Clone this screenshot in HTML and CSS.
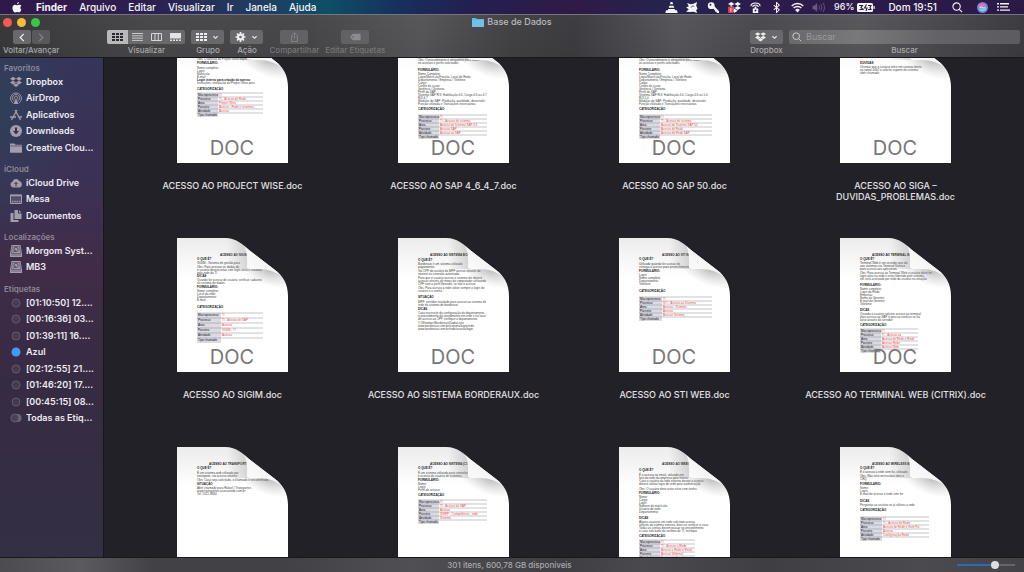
FILE: index.html
```html
<!DOCTYPE html>
<html lang="pt-BR">
<head>
<meta charset="utf-8">
<title>Base de Dados</title>
<link rel="stylesheet" href="styles.css">
</head>
<body>
<svg class="defs" aria-hidden="true">
  <symbol id="dropbox" viewBox="0 0 14 12"><path d="M3.5 0L7 2.2 3.5 4.4 0 2.2zM10.500 0L14 2.200 10.500 4.400 7 2.200zM3.500 4.400L7 6.600 3.500 8.800 0 6.600zM10.500 4.400L14 6.600 10.500 8.800 7 6.600zM7 7.400L10.500 9.600 7 11.800 3.500 9.600z"/></symbol>
  <symbol id="chev" viewBox="0 0 8 6"><path d="M1.500 1.500L4 4 6.500 1.500" fill="none" stroke="currentColor" stroke-width="1.300"/></symbol>
  <symbol id="lens" viewBox="0 0 12 12"><path d="M8 8l3 3M9 5a4 4 0 1 1-8 0 4 4 0 0 1 8 0z" fill="none" stroke="currentColor" stroke-width="1.200"/></symbol>
  <symbol id="grid" viewBox="0 0 11 8"><path d="M0 0h3v2H0zM4 0h3v2H4zM8 0h3v2H8zM0 3h3v2H0zM4 3h3v2H4zM8 3h3v2H8zM0 6h3v2H0zM4 6h3v2H4zM8 6h3v2H8z"/></symbol>
  <symbol id="disk" viewBox="0 0 12 12"><path d="M1.500 0h9L12 9v3H0V9z"/><path d="M2.500 1.500h7L10.500 8.500h-9zM1 10h10" fill="none" stroke="#3d2d49" stroke-width=".5"/><circle cx="6" cy="4.500" r="2.200" fill="none" stroke="#3d2d49" stroke-width=".7"/><path d="M6 4.500L3.500 7.500" stroke="#3d2d49" stroke-width=".8"/></symbol>
  <symbol id="tag" viewBox="0 0 12 12"><circle cx="6" cy="6" r="4" fill="#ffffff12" stroke="#6b6474" stroke-width=".8"/></symbol>
</svg>

<header class="menubar">
  <nav class="menus">
    <svg class="apple" viewBox="0 0 12 13"><path d="M8.300 0c.1 1.300-1 2.600-2.300 2.600C5.900 1.400 7.100.2 8.300 0zM10 6.600c0-1.200.8-1.900 1.300-2.200C10.500 3.300 9.400 3.100 8.800 3.100c-1.100 0-1.700.6-2.600.6-.8 0-1.600-.6-2.600-.6C1.900 3.200.5 4.700.5 7c0 2.600 1.700 5.500 3.200 5.500.8 0 1.300-.5 2.300-.5s1.300.5 2.300.5c1.300 0 2.400-1.900 2.900-3.300C10.400 8.900 10 7.800 10 6.600z"/></svg>
    <button class="menu app">Finder</button>
    <button class="menu">Arquivo</button>
    <button class="menu">Editar</button>
    <button class="menu">Visualizar</button>
    <button class="menu">Ir</button>
    <button class="menu">Janela</button>
    <button class="menu">Ajuda</button>
  </nav>
  <div class="extras">
    <svg viewBox="0 0 14 12"><path d="M6 0h2l.8 2.500H5.200zM4.700 4h4.600l.7 2.300H4zM3.500 7.500h7l.6 1.500H13l.7 3H.3L1 9h1.900z"/></svg>
    <svg viewBox="0 0 14 12"><path d="M1 1l4 1.500L8 2l4-2-1 4 1.500 3L11 9l1 3-4-1.500L4 11 0 10.500 3 8 0 6l3-1.500z"/><path d="M5.500 6l2-2 1 1" stroke="#25204c" fill="none"/></svg>
    <svg viewBox="0 0 14 12"><circle cx="4.500" cy="4" r="3.700"/><path d="M5.500 6l2-2 5.500 6v2h-2.500V10.500H9L8.500 9z"/><circle cx="3.700" cy="3" r="1" fill="#28204c"/></svg>
    <svg viewBox="0 0 14 12"><use href="#dropbox"/><rect y="5" width="6" height="7" rx="1" fill="#d9434a"/><path d="M3 6.500v4" stroke="#fff"/></svg>
    <svg viewBox="0 0 14 12"><path d="M2 4.500C2 0 12 0 12 4.500M4 5.500c0-3 6-3 6 0" fill="none" stroke="currentColor" stroke-width="1.200"/><path d="M6 5h2v2h2v5H4V7h2z"/><circle cx="7" cy="9.300" r="1" fill="#2a1d4a"/></svg>
    <svg viewBox="0 0 14 12"><path d="M4 3.500l6 5-3 3V.5l3 3-6 5" fill="none" stroke="currentColor" stroke-width="1.100"/></svg>
    <svg viewBox="0 0 14 12"><path d="M.7 4.300a9 9 0 0 1 12.600 0M2.800 6.600a6 6 0 0 1 8.400 0" fill="none" stroke="currentColor" stroke-width="1.600"/><path d="M4.500 8.600a3.700 3.700 0 0 1 5 0L7 11.500z"/></svg>
    <svg class="faint" viewBox="0 0 14 12"><path d="M0 4h2l3-3v10L2 8H0z"/><path d="M7 4q1 2 0 4M9 2.500q2.500 3.500 0 7M11.300 1q3.500 5 0 10" fill="none" stroke="currentColor"/></svg>
    <span class="power">96%</span>
    <svg class="batt" viewBox="0 0 18 9"><rect width="16" height="9" rx="1.500"/><path d="M16.500 3h1.200v3h-1.200z"/><path d="M2 2.500h3.500L4 4.500l2 2H2.500M9.500 1.500L7.500 5H10L9 8M11 2.500h3l-1 2 1 2h-3" fill="none" stroke="#2a1d4a" stroke-width="1.100"/></svg>
    <span class="clock">Dom 19:51</span>
    <svg class="spot" viewBox="0 0 12 12"><use href="#lens"/></svg>
    <svg class="siri" viewBox="0 0 12 12"><circle cx="6" cy="6" r="6" fill="#7d7fc8"/><path d="M1 5c3-5 7-4 9-1-3 0-5 3-9 1z" fill="#e673b8"/><path d="M2 8c3-3 6 1 9-2-1 5-7 6-9 2z" fill="#5fd9ec"/><path d="M2.500 6.500c3-3 4 2 7-1" stroke="#fff" fill="none"/></svg>
    <svg class="list" viewBox="0 0 13 8"><path d="M0 0h2v1.400H0zM3 0h9v1.400H3zM0 3.200h2v1.400H0zM3 3.200h8v1.400H3zM0 6.400h2v1.400H0zM3 6.400h10v1.400H3z"/></svg>
  </div>
</header>

<div class="window">
  <div class="chrome">
    <div class="titlebar">
      <div class="lights">
        <button class="light red" aria-label="Fechar"></button>
        <button class="light yellow" aria-label="Minimizar"></button>
        <button class="light green" aria-label="Ampliar"></button>
      </div>
      <h1 class="title"><svg viewBox="0 0 12 9"><path d="M0 0h4l1 1h7v8H0z" fill="#62b5dc"/><path d="M0 2h12v7H0z" fill="#6fc2e6"/></svg>Base de Dados</h1>
    </div>
    <div class="toolbar">
      <div class="tool nav">
        <div class="pair">
          <button class="btn arrow" aria-label="Voltar"><svg viewBox="0 0 8 10"><path d="M6 1L2 5l4 4" fill="none" stroke="currentColor" stroke-width="1.400"/></svg></button>
          <button class="btn arrow off" aria-label="Avançar"><svg viewBox="0 0 8 10"><path d="M2 1l4 4-4 4" fill="none" stroke="currentColor" stroke-width="1.400"/></svg></button>
        </div>
        <span class="cap">Voltar/Avançar</span>
      </div>
      <div class="tool">
        <div class="segments">
          <button class="seg on" aria-label="Ícones"><svg viewBox="0 0 11 8"><use href="#grid"/></svg></button>
          <button class="seg" aria-label="Lista"><svg viewBox="0 0 11 8"><path d="M0 .5h11M0 2.800h11M0 5.100h11M0 7.400h11" stroke="currentColor" stroke-width=".8"/></svg></button>
          <button class="seg" aria-label="Colunas"><svg viewBox="0 0 11 8"><path d="M.5.5h10v7H.5zM4 .5v7M7.300.5v7" fill="none" stroke="currentColor" stroke-width=".9"/></svg></button>
          <button class="seg" aria-label="Galeria"><svg viewBox="0 0 11 8"><path d="M0 0h11v5.500H0zM0 6.500h2V8H0zM3 6.500h2V8H3zM6 6.500h2V8H6zM9 6.500h2V8H9z"/></svg></button>
        </div>
        <span class="cap">Visualizar</span>
      </div>
      <div class="tool">
        <button class="btn drop" aria-label="Grupo"><svg class="ic" viewBox="0 0 11 8"><use href="#grid"/></svg><svg class="chev" viewBox="0 0 8 6"><use href="#chev"/></svg></button>
        <span class="cap">Grupo</span>
      </div>
      <div class="tool">
        <button class="btn drop" aria-label="Ação"><svg class="ic" viewBox="0 0 12 12"><path d="M6 0v12M0 6h12M1.800 1.800l8.400 8.400M10.200 1.800l-8.400 8.400" stroke="currentColor" stroke-width="2"/><circle cx="6" cy="6" r="4.300"/><circle cx="6" cy="6" r="1.600" fill="#68676b"/></svg><svg class="chev" viewBox="0 0 8 6"><use href="#chev"/></svg></button>
        <span class="cap">Ação</span>
      </div>
      <div class="tool off">
        <button class="btn wide" aria-label="Compartilhar" disabled><svg class="ic" viewBox="0 0 12 12"><path d="M4 4.500H2.500v7h7v-7H8M6 8V1M3.800 3L6 .8 8.200 3" fill="none" stroke="currentColor"/></svg></button>
        <span class="cap">Compartilhar</span>
      </div>
      <div class="tool off">
        <button class="btn wide" aria-label="Editar Etiquetas" disabled><svg class="ic" viewBox="0 0 12 8"><path d="M3 .5h8.500v7H3L0 4z"/><circle cx="3.300" cy="4" r=".8" fill="#59585c"/></svg></button>
        <span class="cap">Editar Etiquetas</span>
      </div>
      <div class="tool end">
        <button class="btn drop" aria-label="Dropbox"><svg class="ic" viewBox="0 0 14 12"><use href="#dropbox"/></svg><svg class="chev" viewBox="0 0 8 6"><use href="#chev"/></svg></button>
        <span class="cap">Dropbox</span>
      </div>
      <div class="tool finder">
        <div class="search"><svg viewBox="0 0 12 12"><use href="#lens"/></svg><input id="q" type="search" placeholder="Buscar"></div>
        <label class="cap" for="q">Buscar</label>
      </div>
    </div>
  </div>

  <div class="body">
    <aside class="sidebar">
      <section>
        <h2>Favoritos</h2>
        <ul>
          <li><a href="#"><svg viewBox="0 0 14 12"><use href="#dropbox"/></svg>Dropbox</a></li>
          <li><a href="#"><svg viewBox="0 0 12 12"><path d="M3 11a5.500 5.500 0 1 1 6 0M4 9.200a3.700 3.700 0 1 1 4 0M5 7.500a1.800 1.800 0 1 1 2 0" fill="none" stroke="currentColor" stroke-width=".9"/><path d="M6 6l2.500 6h-5z"/></svg>AirDrop</a></li>
          <li><a href="#"><svg viewBox="0 0 12 12"><path d="M5 1l5.500 10M7 1L1.500 11M0 8h6M8.500 8H12" fill="none" stroke="currentColor" stroke-width="1.300"/></svg>Aplicativos</a></li>
          <li><a href="#"><svg viewBox="0 0 12 12"><circle cx="6" cy="6" r="6"/><path d="M5 2.500h2V6h2L6 9.500 3 6h2z" fill="#393253"/></svg>Downloads</a></li>
          <li><a href="#"><svg viewBox="0 0 12 12"><path d="M0 1.500h4.500l1 1.300H12v8H0z"/><path d="M0 4h12" stroke="#3d3456" stroke-width=".6"/></svg>Creative Clou...</a></li>
        </ul>
      </section>
      <section>
        <h2>iCloud</h2>
        <ul>
          <li><a href="#"><svg viewBox="0 0 12 12"><path d="M3 10.500a3 3 0 0 1-.5-5.800A3.700 3.700 0 0 1 9.300 4 3.300 3.300 0 0 1 9 10.500z"/><path d="M6 5.500v4M4.500 7L6 5.500 7.500 7" stroke="#3c3050" fill="none"/></svg>iCloud Drive</a></li>
          <li><a href="#"><svg viewBox="0 0 12 12"><path d="M.5 2h11v8.500H.5z" fill="#ffffff22" stroke="currentColor"/><path d="M0 2.500h12M2 8.500h1.300M4.300 8.500h1.300M6.600 8.500h1.300M9 8.500h1.300" stroke="currentColor" stroke-width="1.300"/></svg>Mesa</a></li>
          <li><a href="#"><svg viewBox="0 0 12 12"><path d="M4.500 0H8v3.500h3.500V9h-7zM9 0l2.500 2.500H9zM.5 3h3v7h5v2h-8z"/></svg>Documentos</a></li>
        </ul>
      </section>
      <section>
        <h2>Localizações</h2>
        <ul>
          <li><a href="#"><svg viewBox="0 0 12 12"><use href="#disk"/></svg>Morgom Syst...</a></li>
          <li><a href="#"><svg viewBox="0 0 12 12"><use href="#disk"/></svg>MB3</a></li>
        </ul>
      </section>
      <section>
        <h2>Etiquetas</h2>
        <ul>
          <li><a href="#"><svg viewBox="0 0 12 12"><use href="#tag"/></svg>[01:10:50] 12....</a></li>
          <li><a href="#"><svg viewBox="0 0 12 12"><use href="#tag"/></svg>[00:16:36] 03...</a></li>
          <li><a href="#"><svg viewBox="0 0 12 12"><use href="#tag"/></svg>[01:39:11] 16....</a></li>
          <li><a href="#"><svg viewBox="0 0 12 12"><circle cx="6" cy="6" r="4.500" fill="#3f9bfa"/></svg>Azul</a></li>
          <li><a href="#"><svg viewBox="0 0 12 12"><use href="#tag"/></svg>[02:12:55] 21....</a></li>
          <li><a href="#"><svg viewBox="0 0 12 12"><use href="#tag"/></svg>[01:46:20] 17....</a></li>
          <li><a href="#"><svg viewBox="0 0 12 12"><use href="#tag"/></svg>[00:45:15] 08...</a></li>
          <li><a href="#"><svg viewBox="0 0 12 12"><circle cx="7.500" cy="6" r="4" fill="#6b6474"/><circle cx="4.800" cy="6" r="4" fill="#4b4257" stroke="#6b6474" stroke-width=".8"/></svg>Todas as Etiq...</a></li>
        </ul>
      </section>
    </aside>
    <main class="files" id="files"></main>
  </div>

  <footer class="status">
    <span>301 itens, 600,78 GB disponíveis</span>
    <input class="zoom" type="range" min="0" max="100" value="68" aria-label="Tamanho dos ícones">
  </footer>
</div>
<script src="app.js"></script>
</body>
</html>
```
FILE: styles.css
```css
* { box-sizing: border-box; }
body {
  margin: 0;
  height: 100vh;
  display: flex;
  flex-direction: column;
  overflow: hidden;
  background: #222127;
  color: #e6e5e8;
  font: 500 9px/12px Inter, "Liberation Sans", sans-serif;
}
button {
  margin: 0;
  padding: 0;
  border: 0;
  background: none;
  color: inherit;
  font: inherit;
}
svg { fill: currentColor; flex: none; display: block; }
.defs { position: absolute; width: 0; height: 0; }

.menubar {
  display: flex;
  justify-content: space-between;
  align-items: center;
  height: 14px;
  padding: 0 14px 0 12px;
  color: #f5f4f8;
  background: linear-gradient(90deg, #30184a 0%, #2c2050 15%, #213a60 24%, #0d4f66 32%, #17305c 39%, #231f50 46%, #301a47 56%, #232450 66%, #2c1b4b 75%, #2a1a46 100%);
}
.menus { display: flex; align-items: center; gap: 12px; font-size: 10px; }
.apple { width: 10px; height: 11px; margin-right: 2px; }
.app { font-weight: 700; }
.extras { display: flex; align-items: center; gap: 8px; }
.extras svg { width: 13px; height: 11px; }
.extras .faint { color: #665b80; width: 14px; }
.power { margin-right: -5px; }
.extras .batt { width: 18px; height: 9px; }
.clock { font-size: 10px; margin: 0 6px 0 5px; }
.extras .siri { margin-left: 4px; }
.extras .list { width: 13px; height: 8px; }

.window {
  flex: 1;
  min-height: 0;
  display: flex;
  flex-direction: column;
  border-top: 1px solid #77757b;
}
.chrome {
  border-bottom: 1px solid #19181c;
  background: linear-gradient(#0000, #0001), linear-gradient(90deg, #39393b 0%, #4a494c 15%, #48474a 30%, #58575a 41%, #434245 50%, #3e3d41 56%, #58575b 66%, #4c4b4f 74%, #59585c 84%, #3d3c41 100%);
}
.titlebar {
  display: grid;
  grid-template-columns: 1fr auto 1fr;
  align-items: center;
  height: 14px;
  padding: 0 3px;
}
.lights { display: flex; gap: 5px; }
.light { width: 9px; height: 9px; border-radius: 50%; }
.red { background: #f35a51; }
.yellow { background: #f5bd35; }
.green { background: #35c748; }
.title {
  display: flex;
  align-items: center;
  gap: 3px;
  margin: 0;
  font-size: 9px;
  font-weight: 500;
  color: #bdbcc0;
}
.title svg { width: 12px; height: 9px; }
.toolbar { display: flex; gap: 6px; padding: 1px 4px 1px 3px; }
.tool { display: flex; flex-direction: column; align-items: center; }
.nav { margin-right: 42px; }
.end { margin-left: auto; }
.cap { font-size: 8px; line-height: 12px; color: #aaa9ad; white-space: nowrap; }
.off .cap { color: #77767a; }
.pair { display: flex; gap: 1px; }
.btn {
  display: flex;
  align-items: center;
  justify-content: center;
  height: 14px;
  border-radius: 2px;
  background: #69686c;
  color: #eeedf0;
}
.arrow { width: 18px; }
.arrow svg { width: 8px; height: 9px; }
.arrow.off { background: #59585c; color: #858488; }
.drop { width: 33px; gap: 5px; }
.ic { width: 11px; height: 10px; }
.chev { width: 7px; height: 5px; }
.wide { width: 28px; }
.off .btn { background: #626165; color: #8c8b8f; }
.segments { display: flex; height: 14px; border-radius: 2px; overflow: hidden; background: #69686c; }
.seg { display: grid; place-items: center; width: 19px; color: #e3e2e5; }
.seg svg { width: 11px; height: 8px; }
.seg.on { width: 21px; background: #b9b8bc; color: #29282c; }
.finder { flex: 0 1 231px; }
.search {
  display: flex;
  align-items: center;
  gap: 4px;
  width: 100%;
  height: 14px;
  padding: 0 3px;
  border-radius: 2px;
  background: linear-gradient(90deg, #69686b, #79787b 30%, #636266 65%, #5c5b5f);
}
.search svg { width: 10px; height: 10px; color: #cccbcf; }
.search input {
  flex: 1;
  min-width: 0;
  padding: 0;
  border: 0;
  outline: 0;
  background: none;
  color: #eee;
  font: 400 9px/12px Inter, sans-serif;
}
.search input::placeholder { color: #9b9a9e; }

.body { flex: 1; min-height: 0; display: flex; }
.sidebar {
  flex: none;
  display: flex;
  flex-direction: column;
  gap: 7px;
  width: 104px;
  padding: 4px 0 0 4px;
  overflow: hidden;
  border-right: 1px solid #17161b;
  background: radial-gradient(ellipse 80px 150px at 0 40px, #303f59, #303f5900), linear-gradient(#36345a 0%, #3c3154 25%, #402c48 42%, #372b43 65%, #332f45 100%);
}
.sidebar h2 { margin: 0; font-size: 8px; line-height: 12px; font-weight: 600; color: #908998; }
.sidebar ul { margin: 0; padding: 0; list-style: none; }
.sidebar li { height: 16px; }
.sidebar li:nth-child(even) { height: 17px; }
.sidebar a {
  display: flex;
  align-items: center;
  gap: 4px;
  height: 16px;
  padding-left: 6px;
  color: #eeebf2;
  font-weight: 600;
  text-decoration: none;
  white-space: nowrap;
}
.sidebar svg { width: 12px; height: 12px; color: #a39cab; }

.files {
  flex: 1;
  min-width: 0;
  display: grid;
  grid-template-columns: repeat(4, 1fr);
  grid-auto-rows: 209px;
  padding: 20px 18px 0;
  overflow: auto;
  scrollbar-width: none;
  background: #222127;
}
.file { display: flex; flex-direction: column; align-items: center; gap: 8px; margin: 0; }
.file figcaption {
  max-width: 200px;
  font-size: 9px;
  line-height: 11px;
  text-align: center;
  color: #e2e1e5;
}
.page { width: 111px; height: 143px; overflow: visible; }
.tiny { font: 3px "Liberation Sans", sans-serif; fill: #444; }
.bold { font-weight: 700; fill: #222; }
.label { fill: #111; }
.value { fill: #f0453f; }
.kind { font: 400 20px Inter, sans-serif; fill: #777; text-anchor: middle; }

.status {
  display: grid;
  grid-template-columns: 1fr auto 1fr;
  align-items: center;
  height: 15px;
  padding: 0 9px 0 4px;
  border-top: 1px solid #19181c;
  font-size: 8px;
  color: #aaa9ad;
  background: linear-gradient(90deg, #4c4b4f, #5b5a5e 8%, #424145 15%, #424145 28%, #504f53 40%, #3f3e42 55%, #4a494d 63%, #3f3e42 75%, #4b4a4e 90%, #434246);
}
.status span { grid-column: 2; }
.zoom {
  justify-self: end;
  appearance: none;
  width: 58px;
  height: 8px;
  margin: 0;
  background: linear-gradient(90deg, #2d69b5 66%, #656468 66%) center / 100% 2px no-repeat;
}
.zoom::-webkit-slider-thumb {
  appearance: none;
  width: 8px;
  height: 8px;
  border-radius: 50%;
  background: #dddce0;
}
```
FILE: app.js
```js
const F = 'FORMULÁRIO:';
const C = 'CATEGORIZAÇÃO';
const Q = 'O QUE É?';

// Lines are [baseline, text, bold]; lines in capitals are headings.
const files = [
  { name: 'ACESSO AO PROJECT WISE.doc',
    lines: [[31, 'Obs: O acesso ao Project Wise depende da área'], [35, F], [40, 'Nome completo:'], [43, 'Login:'], [46, 'Matrícula:'], [49, 'E-mail:'], [52, 'Login interno para criação do acesso', 1], [55, 'Instruções: instalação do Project Wise para'], [61, C]],
    table: { y: 64, step: 4, w: 66, split: 21, v: ['TI', 'TI - Acesso de Rede', 'Project Wise', 'Acesso - Rede e sistemas', 'Acesso'] } },
  { name: 'ACESSO AO SAP 4_6_4_7.doc',
    lines: [[32, 'Obs: O procedimento é obrigatório para todos'], [35, 'os acessos e perfis solicitados'], [42, F], [46, 'Nome Completo:'], [49, 'Login/Matrícula/Função, Local de Rede:'], [52, 'Departamento / Empresa / Telefone'], [55, 'Cargo:'], [58, 'Centro de custo:'], [61, 'Gerência / Diretoria:'], [64, 'Perfil do SAP:'], [67, 'Sistema SAP R/3, Habilitação 4.6, Cargo 4.6 ou 4.7'], [70, 'R/3 4.7'], [73, 'Módulos do SAP: Produção, qualidade, desenvolv.'], [76, 'Função utilizada e Transações necessárias'], [81, C]],
    table: { y: 86, step: 4, w: 69, split: 21, v: ['TI', 'TI - Acesso de sistema', 'Acesso de Sistema SAP 4.6', 'Acesso SAP', 'Acesso ao SAP'] } },
  { name: 'ACESSO AO SAP 50.doc',
    lines: [[32, 'Obs: O procedimento é obrigatório para todos'], [35, 'os acessos e perfis solicitados'], [42, F], [46, 'Nome Completo:'], [49, 'Login/Matrícula/Função, Local de Rede:'], [52, 'Departamento / Empresa / Telefone'], [55, 'Cargo:'], [58, 'Centro de custo:'], [61, 'Gerência / Diretoria:'], [64, 'Perfil do SAP:'], [67, 'Sistema SAP R/3, Habilitação 4.6, Cargo 4.6 ou 5.0'], [70, 'R/3 5.0'], [73, 'Módulos do SAP: Produção, qualidade, desenvolv.'], [76, 'Função utilizada e Transações necessárias'], [81, C]],
    table: { y: 86, step: 4, w: 73, split: 21, v: ['TI', 'TI - Acesso de sistema', 'Acesso de Sistema SAP 50', 'Acesso de Rede', 'Acesso de Rede SAP'] } },
  { name: 'ACESSO AO SIGA – DUVIDAS_PROBLEMAS.doc',
    lines: [[35, 'DÚVIDAS'], [39, 'Orientar que o usuário entre em contato direto'], [42, 'no ramal 4432 e solicite suporte do sistema'], [45, 'abrir chamado']] },
  { name: 'ACESSO AO SIGIM.doc', title: 'ACESSO AO SIGIM',
    lines: [[22, Q], [26, 'SIGIM - Sistema de gestão para'], [30, 'Obs: Para acessar os dados do'], [33, 'o usuário deverá estar com login ativo e validado'], [36, 'pela rede da TI'], [39, 'DICAS'], [43, 'Quando for acesso de usuário, verificar cadastro'], [46, 'no sistema de dados'], [50, F], [54, 'Nome completo:'], [57, 'Local da rede:'], [60, 'Departamento:'], [63, 'E-mail:'], [70, C]],
    table: { y: 75, step: 5, w: 66, split: 24, v: ['TI', 'TI - Acesso de SAP', 'Acesso', 'SIGIM - TI', 'Acesso'] } },
  { name: 'ACESSO AO SISTEMA BORDERAUX.doc', title: 'ACESSO AO SISTEMA BORD',
    lines: [[23, Q], [27, 'Borderaux é um sistema utilizado'], [30, 'pagamentos'], [34, 'Via CPF do usuário da MPF acesse através da'], [37, 'internet ou conexão autorizada'], [41, 'Para que o usuário acesse o sistema ele deverá'], [44, 'acessar através do menu do computador utilizando'], [47, 'CPF com o perfil liberado, se não o acesso'], [51, 'Obs: Para acesso a rede utilize sempre o login do'], [54, 'usuário e a senha'], [60, 'SITUAÇÃO'], [65, 'MPF: servidor instalado para acesso ao sistema de'], [68, 'rede do sistema de borderaux'], [72, 'DICAS'], [76, 'Caso necessite da configuração do departamento'], [79, 'o procedimento de atendimento em rede e no local'], [82, 'de acesso ao CPF, verifique o departamento'], [86, 'C:\\Windows\\Borderaux\\Dados.exe'], [89, 'www.borderaux.com.br/sistema/login/rede'], [92, 'www.borderaux.com.br/rede/acesso/login']] },
  { name: 'ACESSO AO STI WEB.doc', title: 'ACESSO AO STI WEB',
    lines: [[22, Q], [27, 'Utilizado quando for acesso de'], [30, 'consiga o acesso para preenchimento'], [34, F], [38, 'Login:'], [41, 'Nome completo:'], [44, 'Departamento:'], [47, 'Telefone:'], [54, C]],
    table: { y: 59, step: 4, w: 73, split: 23, v: ['TI', 'STI - Acesso ao Sistema', 'Acesso - Sistema', 'Acesso', 'Acesso Sistema'] } },
  { name: 'ACESSO AO TERMINAL WEB (CITRIX).doc', title: 'ACESSO AO TERMINAL WEB',
    lines: [[22, Q], [26, 'Terminal Web é um servidor que dá'], [29, 'aos sistemas via Terminal Service'], [32, 'para acesso aos aplicativos'], [36, 'Obs: Para acesso ao Terminal Web o usuário deve ter'], [39, 'login ativo na rede e estar liberado pelo sistema'], [42, 'ele será acessado por rede do usuário na estação'], [48, F], [52, 'Nome completo:'], [55, 'Login da Rede:'], [58, 'Empresa:'], [61, 'Nome do Gerente:'], [64, 'E-mail do Gerente:'], [67, 'Telefone:'], [73, 'DICAS'], [77, 'Quando o usuário solicitar acesso ao terminal'], [80, 'para acesso ao SAP é preciso verificar se há'], [83, 'ativo através do servidor'], [88, C]],
    table: { y: 91, step: 4, w: 58, split: 21, v: ['TI', 'TI - Acesso ao', 'Acesso de Rede e Rede', 'Acesso Rede', 'Acesso Web'] } },
  { name: 'ACESSO AO TRANSPORTE.doc', title: 'ACESSO AO TRANSPORTE',
    lines: [[22, Q], [27, 'É um sistema web utilizado por'], [30, 'transporte, via acesso externo'], [34, 'Obs: Caso seja solicitado, o chamado é encaminhado'], [38, 'SITUAÇÃO'], [42, 'Abrir chamado para Rafael / Transportes'], [45, 'www.transportes.acessorede.com.br'], [48, 'Tel: 5511-9860']] },
  { name: 'ACESSO AO SISTEMA.doc', title: 'ACESSO AO SISTEMA (CO)',
    lines: [[22, Q], [27, 'É um sistema utilizado para controles'], [30, 'e acesso do usuário de sistemas'], [34, F], [38, 'Nome:'], [41, 'Login:'], [44, 'Perfil de acesso:'], [49, C]],
    table: { y: 53, step: 4, w: 69, split: 21, v: ['TI', 'TI - Acesso de SAP', 'Acesso', 'SISRP - Competência - rede', 'Sistema'] } },
  { name: 'ACESSO AO WEBMAIL.doc', title: 'ACESSO AO WEBMAIL',
    lines: [[24, Q], [29, 'É o acesso ao email, utilizado em'], [32, 'fora da rede da empresa para leitura'], [35, 'Caso o usuário da rede externa deseje o acesso'], [38, 'deverá utilizar login de rede para autenticação'], [43, 'Obs: O usuário deve estar ativo com senha'], [47, F], [51, 'Nome:'], [54, 'Cargo:'], [57, 'Login:'], [60, 'Número da matrícula:'], [63, 'Usuário de rede:'], [66, 'Departamento:'], [72, 'DICAS'], [76, 'Alguns usuários em rede solicitam acesso'], [79, 'através do número externo, deve-se verificar o caso'], [82, 'Todas as contas devem passar no procedimento'], [85, 'e caso solicitado do sistema de TI, verifique'], [90, C]],
    table: { y: 93, step: 4, w: 56, split: 21, v: ['TI', 'TI - Acesso a Rede', 'Acesso a Rede e Email', 'Acesso Webmail', 'Acesso de Email'] } },
  { name: 'ACESSO AO WIRELESS.doc', title: 'ACESSO AO WIRELESS BR',
    lines: [[22, Q], [26, 'É o acesso à rede sem fio, utilizado'], [30, 'Obs: Não será necessário abrir o'], [33, 'CRQ'], [38, F], [42, 'Nome:'], [45, 'Login:'], [48, 'E-mail de acesso à rede sem fio:'], [55, 'DICAS'], [59, 'Perguntar ao usuário se já utilizou a rede'], [64, C]],
    table: { y: 70, step: 4, w: 69, split: 22, v: ['TI', 'TI - Acesso de Rede', 'Acesso de Rede e Sem Fio', 'Acesso', 'Configuração Rede'] } }
];

const labels = ['Macroprocesso', 'Processo', 'Área', 'Parceiro', 'Atividade', 'Tipo chamado'];
const isHeading = s => s === s.toUpperCase() && /[A-Z]{4}|QUE/.test(s);

function drawTable(t) {
  const x = 20;
  let out = `<rect x="${x}" y="${t.y}" width="${t.split}" height="${t.step * 6}" fill="#dcdbe3"/>`;
  labels.forEach((label, i) => {
    const y = t.y + t.step * i;
    out += `<path d="M${x} ${y}h${t.w}" stroke="#8a8a90" stroke-width=".5"/>`;
    out += `<text class="tiny label" x="${x + 1}" y="${y + 3}">${label}</text>`;
    if (t.v[i]) out += `<text class="tiny value" x="${x + t.split + 1}" y="${y + 3}">${t.v[i]}</text>`;
  });
  return out;
}

function drawPage(f, i) {
  const title = f.title ? `<text class="tiny bold" x="${f.title.length > 17 ? 32 : 43}" y="18">${f.title}</text>` : '';
  const lines = f.lines.map(([y, s, b]) =>
    `<text class="tiny${b || isHeading(s) ? ' bold' : ''}" x="20" y="${y}">${s}</text>`).join('');
  return `<svg class="page" viewBox="0 0 111 143" aria-hidden="true">
    <defs>
      <clipPath id="c${i}"><path d="M0 0H48C60 0 66 7 72 12L98 32C106 38 111 46 111 58V134H0z"/></clipPath>
      <linearGradient id="p${i}" x1="0" y1="0" x2="0" y2="1"><stop offset="0" stop-color="#ececec"/><stop offset=".3" stop-color="#fff"/></linearGradient>
      <linearGradient id="l${i}"><stop offset="0" stop-color="#888" stop-opacity="0"/><stop offset="1" stop-color="#888" stop-opacity=".35"/></linearGradient>
      <radialGradient id="b${i}" gradientUnits="userSpaceOnUse" cx="0" cy="0" r="1" gradientTransform="translate(92 31) rotate(20) scale(32 17)"><stop offset="0" stop-color="#777" stop-opacity=".5"/><stop offset="1" stop-color="#999" stop-opacity="0"/></radialGradient>
      <linearGradient id="f${i}" x1="0" y1="1" x2=".6" y2=".4"><stop offset="0" stop-color="#fff"/><stop offset=".8" stop-color="#f4f4f4"/><stop offset="1" stop-color="#ddd"/></linearGradient>
    </defs>
    <g clip-path="url(#c${i})">
      <rect width="111" height="134" fill="url(#p${i})"/>
      ${title}${lines}${f.table ? drawTable(f.table) : ''}
      <path d="M50 0H72V31H50z" fill="url(#l${i})"/>
      <path d="M50 31H111V70H50z" fill="url(#b${i})"/>
      <path d="M66 6Q71 12 70 30Q71 31 82 31Q96 31 107 40V0z" fill="url(#f${i})"/>
    </g>
    <text class="kind" x="55" y="126">DOC</text>
  </svg>`;
}

const view = document.getElementById('files');
view.innerHTML = files.map((f, i) =>
  `<figure class="file">${drawPage(f, i)}<figcaption>${f.name}</figcaption></figure>`).join('');
view.scrollTop = 49;
```
